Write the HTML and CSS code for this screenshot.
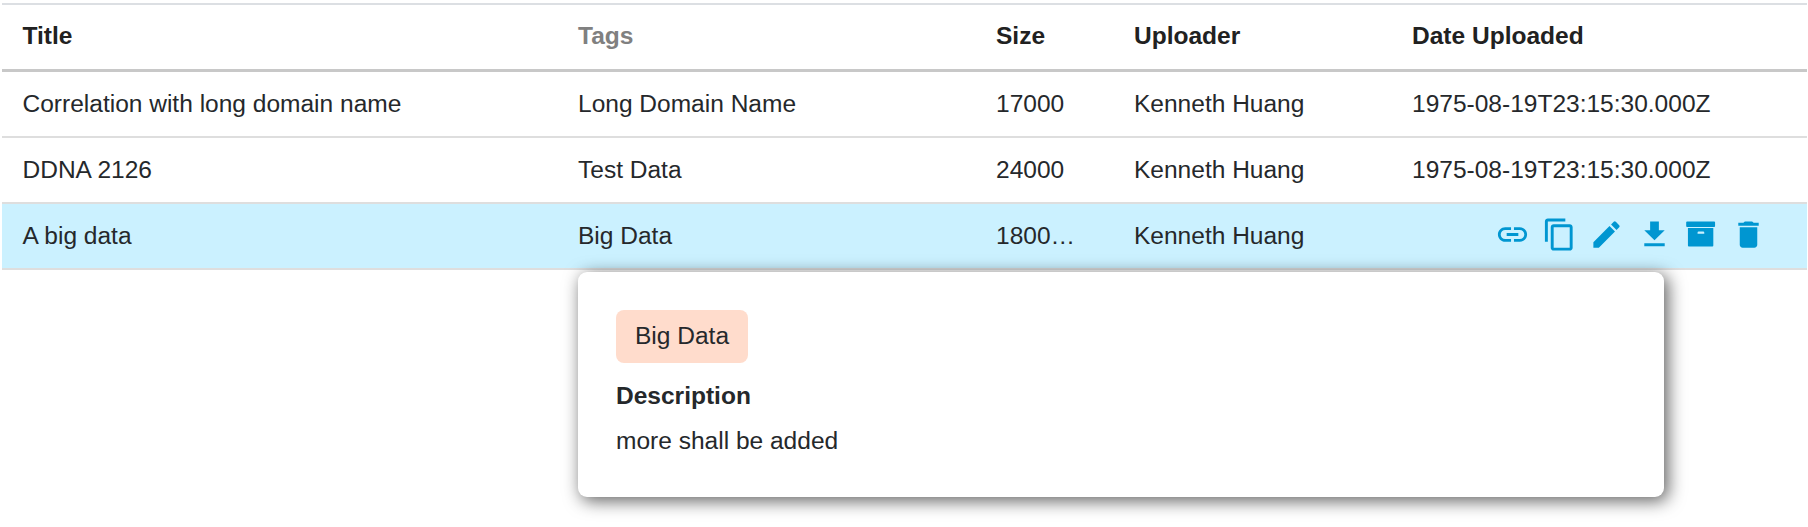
FILE: index.html
```html
<!DOCTYPE html>
<html lang="en">
<head>
<meta charset="utf-8">
<title>Datasets</title>
<link rel="stylesheet" href="styles.css">
</head>
<body>
<div class="table">
  <div class="row head">
    <div>Title</div><div class="muted">Tags</div><div>Size</div><div>Uploader</div><div>Date Uploaded</div>
  </div>
  <div class="row">
    <div>Correlation with long domain name</div><div>Long Domain Name</div><div>17000</div><div>Kenneth Huang</div><div>1975-08-19T23:15:30.000Z</div>
  </div>
  <div class="row">
    <div>DDNA 2126</div><div>Test Data</div><div>24000</div><div>Kenneth Huang</div><div>1975-08-19T23:15:30.000Z</div>
  </div>
  <div class="row selected">
    <div>A big data</div><div>Big Data</div><div>1800…</div><div>Kenneth Huang</div>
    <div class="actions">
      <svg viewBox="0 0 24 24"><path d="M3.9 12c0-1.710 1.390-3.100 3.100-3.100h4V7H7c-2.760 0-5 2.240-5 5s2.240 5 5 5h4v-1.900H7c-1.710 0-3.100-1.390-3.100-3.100zM8 13h8v-2H8v2zm9-6h-4v1.900h4c1.710 0 3.100 1.390 3.100 3.100s-1.390 3.100-3.100 3.100h-4V17h4c2.760 0 5-2.240 5-5s-2.240-5-5-5z"/></svg>
      <svg viewBox="0 0 24 24"><path d="M16 1H4c-1.100 0-2 .9-2 2v14h2V3h12V1zm3 4H8c-1.100 0-2 .9-2 2v14c0 1.100.9 2 2 2h11c1.100 0 2-.9 2-2V7c0-1.100-.9-2-2-2zm0 16H8V7h11v14z"/></svg>
      <svg viewBox="0 0 24 24"><path d="M3 17.250V21h3.750L17.810 9.940l-3.750-3.750L3 17.250zM20.710 7.040a1 1 0 0 0 0-1.410l-2.340-2.340a1 1 0 0 0-1.410 0l-1.830 1.830 3.750 3.750 1.830-1.830z"/></svg>
      <svg viewBox="0 0 24 24"><path d="M19 9h-4V3H9v6H5l7 7 7-7zM5 18v2h14v-2H5z"/></svg>
      <svg viewBox="0 0 24 24"><path fill-rule="evenodd" d="M2.100 3h18.600q.6 0 .6.600v2.600q0 .6-.6.600H2.100q-.6 0-.6-.6V3.600q0-.6.6-.6zM2.700 7.600h17.400v12q0 .6-.6.600H3.300q-.6 0-.6-.6zM10 10q-.6 0-.7.600v.8h4.600v-.8q-.1-.6-.7-.6z"/></svg>
      <svg viewBox="0 0 24 24"><path d="M6 19c0 1.100.9 2 2 2h8c1.100 0 2-.9 2-2V7H6v12zM19 4h-3.500l-1-1h-5l-1 1H5v2h14V4z"/></svg>
    </div>
  </div>
  <div class="popover">
    <span class="chip">Big Data</span>
    <div class="label">Description</div>
    <div class="text">more shall be added</div>
  </div>
</div>
</body>
</html>
```
FILE: styles.css
```css
body {
  display: flow-root;
  box-sizing: border-box;
  min-height: 527px;
  margin: 0;
  background: #fff;
  color: #25282b;
  font-family: "Liberation Sans", Arial, sans-serif;
  font-size: 24.53px;
}

.table {
  position: relative;
  margin: 3px 1px 0 2px;
  border-top: 2px solid #dcdfe3;
}

.row {
  display: grid;
  grid-template-columns: 555.5px 418px 138px 278px 1fr;
  box-sizing: border-box;
  height: 66px;
  padding-left: 20.5px;
  border-bottom: 2px solid #dedede;
  line-height: 63px;
  white-space: nowrap;
}

.head {
  height: 67px;
  border-bottom: 3px solid #c8c8c8;
  line-height: 62px;
  font-weight: bold;
  color: #212121;
}

.muted {
  color: #808080;
}

.selected {
  background: #cbf1ff;
}

.actions {
  display: flex;
  justify-content: flex-end;
  align-items: center;
  gap: 12.2px;
  padding: 0 41px 3px 0;
}

.actions svg {
  width: 35px;
  height: 35px;
  fill: #0096d1;
}

.popover {
  position: absolute;
  left: 576px;
  top: 267px;
  box-sizing: border-box;
  width: 1086px;
  height: 225px;
  padding: 38px;
  border-radius: 9px;
  background: #fff;
  box-shadow: 3.5px 3.5px 17px rgba(0, 0, 0, .62);
}

.chip {
  display: block;
  width: max-content;
  padding: 0 19px 2px;
  border-radius: 8px;
  background: #ffdccc;
  line-height: 51px;
}

.label {
  margin-top: 17px;
  line-height: 32px;
  font-weight: bold;
}

.text {
  margin-top: 13px;
  line-height: 31px;
}
```
